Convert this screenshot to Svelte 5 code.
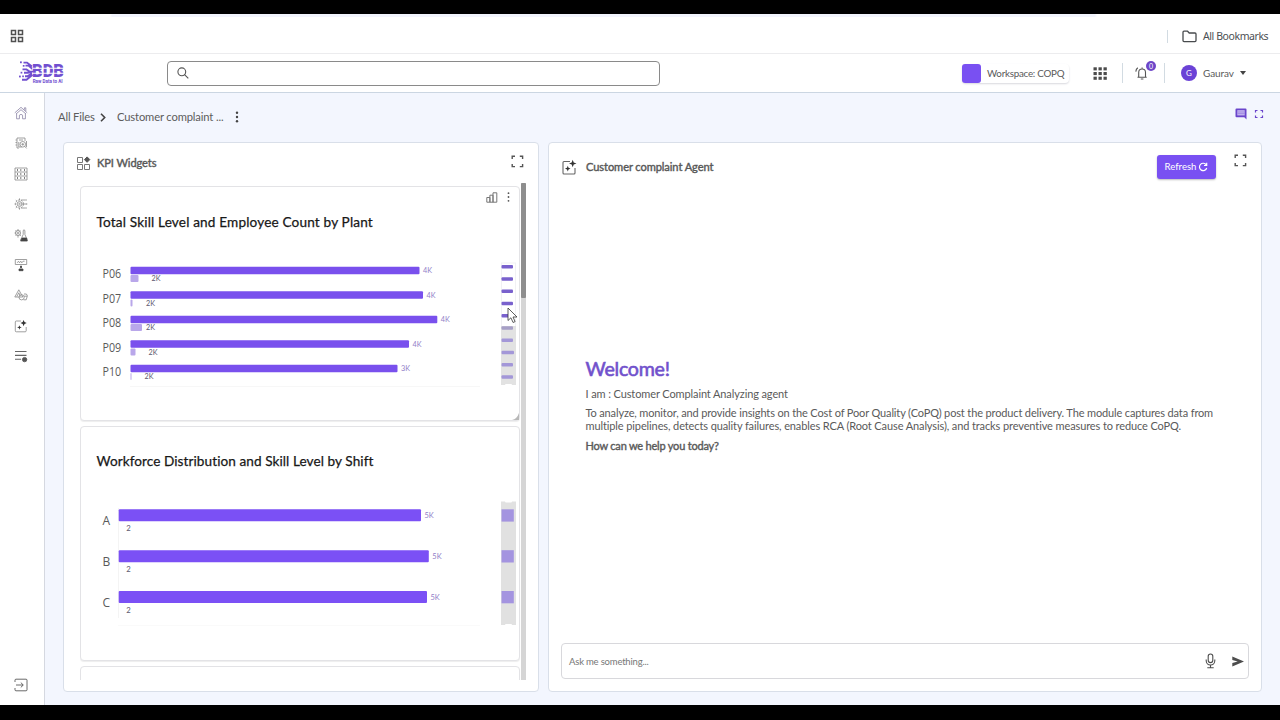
<script>
  const plants = [
    { name: 'P06', y: 270.5, end: 419.5, label: '4K', sub: 8, subX: 151.5 },
    { name: 'P07', y: 295, end: 423, label: '4K', sub: 2, subX: 146 },
    { name: 'P08', y: 319.5, end: 437.3, label: '4K', sub: 11.5, subX: 146 },
    { name: 'P09', y: 344, end: 409, label: '4K', sub: 5, subX: 148.5 },
    { name: 'P10', y: 368.5, end: 397.5, label: '3K', sub: 1, subX: 144.5 },
  ];
  const shifts = [
    { name: 'A', y: 515.3, end: 421 },
    { name: 'B', y: 556.2, end: 428.8 },
    { name: 'C', y: 597, end: 427 },
  ];
  const ticks = [0, 1, 2, 3, 4, 5, 6, 7, 8, 9];
</script>

<div class="screen">
  <div class="chrome">
    <svg class="grid4" width="14" height="14" viewBox="0 0 14 14" fill="none" stroke="#505050" stroke-width="1.5">
      <path d="M1.5 1.5h4v4h-4zM8.5 1.5h4v4h-4zM1.5 8.5h4v4h-4zM8.5 8.5h4v4h-4z" />
    </svg>
    <i class="vline"></i>
    <svg width="15" height="13" viewBox="0 0 15 13" fill="none" stroke="#484b4e" stroke-width="1.3" stroke-linejoin="round">
      <path d="M1 2.2Q1 1.2 2 1.2h3.6L7.2 3H13q1 0 1 1v6.6q0 1-1 1H2q-1 0-1-1z" />
    </svg>
    <span class="bookmarks">All Bookmarks</span>
  </div>

  <header>
    <svg class="logo" width="48" height="26" viewBox="18 60 48 26">
      <g stroke="#714fd0" stroke-width="1.9" fill="none">
        <path d="M23.5 62.600h3.500l5 4M25.500 65.600h3l4 3.400M22.500 69.400h4l3 2.200h4M24 72.700h4l4-.8M25 76.200h2.500l4.500-3M22 79.800h4.500l6-5" />
      </g>
      <g fill="#714fd0">
        <rect x="20" y="61.400" width="1.800" height="1.800" /><rect x="22.800" y="65" width="1.700" height="1.700" />
        <rect x="19" y="75.600" width="1.800" height="1.800" /><rect x="22.200" y="75.500" width="1.700" height="1.700" />
        <rect x="20.600" y="71.800" width="1.700" height="1.700" />
      </g>
      <text class="mark" x="32" y="77.400" textLength="32" lengthAdjust="spacingAndGlyphs">BDB</text>
      <path d="M32 68.300h32M32 73.300h32" stroke="#fff" stroke-width="1.100" />
      <text class="tag" x="32.700" y="83.300" textLength="30" lengthAdjust="spacingAndGlyphs">Raw Data to AI</text>
    </svg>
    <div class="search">
      <svg width="12" height="12" viewBox="0 0 12 12" fill="none" stroke="#555" stroke-width="1.1"><circle cx="4.800" cy="4.800" r="3.900" /><path d="M7.600 7.600l3.700 3.700" /></svg>
    </div>
    <div class="workspace"><b></b><span>Workspace: COPQ</span></div>
    <svg class="apps" width="14" height="13" viewBox="0 0 14 13" fill="#4b4b4b">
      {#each [0, 1, 2] as r}
        {#each [0, 1, 2] as c}
          <rect x={0.5 + c * 5} y={0.3 + r * 4.7} width="3.300" height="3.100" />
        {/each}
      {/each}
    </svg>
    <i class="vline v1"></i>
    <div class="bell">
      <svg width="14" height="15" viewBox="0 0 14 15" fill="none" stroke="#555" stroke-width="1.1">
        <path d="M2.500 11.200h9.200M3.700 11V6.400a3.400 3.400 0 0 1 6.800 0V11M7.100 3V1.600M5.800 13h2.600" />
        <path d="M.8 5.600Q1 3.200 2.800 1.800" />
      </svg>
      <em>0</em>
    </div>
    <i class="vline v2"></i>
    <span class="avatar">G</span>
    <span class="user">Gaurav</span>
    <i class="caret"></i>
  </header>

  <div class="body">
    <nav>
      <svg viewBox="0 0 14 14"><g stroke="#8a83a4"><path d="M.8 6.800 7 1.300l6.200 5.500M2 8l5-4.300L12 8M10.400 3.700V1.800h1.400v3.400" /><path d="M2.600 7.800v5h2.800V9.200q1.600-1.800 3.200 0v3.600h2.800v-5" /></g></svg>
      <svg viewBox="0 0 14 14"><path d="M3 2h8v3M3 2v10h2M1.500 4h1.400M1.500 6.500h1.400M1.500 9h1.400M5 4h4M4.800 6v5h3" /><circle cx="8.800" cy="8.300" r="2.800" /><path d="M7.400 8.300h2.800M8.800 7v2.700M10.800 10.400l1.800 2M12.500 5v6" /></svg>
      <svg viewBox="0 0 14 14"><path d="M1 1h12v12H1zM1 5h12M1 9h12" /><path stroke="#555" stroke-width="1.400" d="M3 3h1M6.300 3h1M10 3h1M3 7h1M6.300 7h1M10 7h1M3 11h1M6.300 11h1M10 11h1" /></svg>
      <svg viewBox="0 0 14 14"><circle cx="5.500" cy="7" r="4" stroke-dasharray="2 .8" /><circle cx="5.500" cy="7" r="2.400" /><path d="M5.500 1.400v1.800M5.500 10.800v1.800M.5 7h1.200M1.800 3.200l1.200 1M1.800 10.800l1.200-1M7 3h4M7.800 7H12M7 11h4" /><path stroke="#555" stroke-width="1.200" d="M11.500 3h1M12.200 7h1M11.500 11h1" /><path d="M4.500 6.300h2M4.500 7.800h2" /></svg>
      <svg viewBox="0 0 14 14"><circle cx="4" cy="5" r="2.600" /><circle cx="4" cy="5" r="1" /><path d="M4 1v1.400M4 7.600v2M.6 5h1M1.500 2.500l1 1M1.600 7.500l1-1M6.400 2.600l-1 1M5.500 6.700l1.500 1M9 2.200h2M9.200 2.500v4L6.600 12M10.900 2.500v4l2.200 5" /><path fill="#444" stroke="#444" d="M8 10h4.600l.7 3H6.600z" /></svg>
      <svg viewBox="0 0 14 14"><path d="M1.300 1.500h11.400v5H1.300zM3.200 4.800l1.300-1.600 1 1.600 1.300-1.600 1 1.600 1.300-1.600h1.500" /><path fill="#444" stroke="#444" d="M6.500 8h1v1.800h-1zM5 11h4v1.700H5z" /></svg>
      <svg viewBox="0 0 14 14"><path d="m.8 9 4-7.200 4 7.200zM2.800 8.600l2-3.800 1.500 3.300" /><circle cx="7.600" cy="9.300" r="2.600" /><path d="M10 6h2.400l1 1.800-1.200 4H9.600M10 8.200h3" /></svg>
      <svg viewBox="0 0 14 14"><path d="M7 2H2.200Q1.300 2 1.300 3v8.800q0 1 .9 1h9q1 0 1-1V8" /><path fill="#333" stroke="none" d="M9.600.9l.9 2.200 2.200.9-2.200.9-.9 2.300-.9-2.300L6.500 4l2.200-.9zM5.400 6.200l.6 1.600 1.700.7-1.700.6-.6 1.700-.6-1.700-1.700-.6 1.700-.7z" /></svg>
      <svg viewBox="0 0 14 14"><path stroke="#666" stroke-width="1.100" d="M1 2.500h11.500M1 6.400h11.500M1 10.200h6" /><circle cx="10.600" cy="10.600" r="2.200" fill="#555" stroke="#555" /></svg>
      <svg class="exit" viewBox="0 0 14 14"><path stroke="#444" d="M1 4V2.200q0-1 1-1h10q1 0 1 1v9.600q0 1-1 1H2q-1 0-1-1V10M2 7h7M6.800 4.600 9.300 7 6.800 9.400" /></svg>
    </nav>

    <main>
      <div class="crumbs">
        <span class="c1">All Files</span>
        <svg width="6" height="9" viewBox="0 0 6 9" fill="none" stroke="#444" stroke-width="1.600"><path d="M1 .8 4.700 4.500 1 8.200" /></svg>
        <span class="c2">Customer complaint ...</span>
        <svg class="more" width="4" height="12" viewBox="0 0 4 12" fill="#444"><circle cx="2" cy="1.800" r="1.200" /><circle cx="2" cy="6" r="1.200" /><circle cx="2" cy="10.200" r="1.200" /></svg>
        <svg class="chat" width="12" height="12" viewBox="0 0 12 12"><path fill="#6a45cb" d="M1.500.5h9q1 0 1 1v10L9.300 9.300H1.500q-1 0-1-1V1.500q0-1 1-1z" /><path fill="#c9baf2" d="M2.300 2.200h7.400v5.200H2.300z" /><path stroke="#8d72da" stroke-width=".7" d="M2.600 4h7M2.600 5.700h7" /></svg>
        <svg class="full" width="10" height="10" viewBox="0 0 10 10" fill="none" stroke="#6a45cb" stroke-width="1.200"><path d="M1.500 3.500V1.500h2M6.500 1.500h2v2M8.500 6.500v2h-2M3.500 8.500h-2v-2" /></svg>
      </div>

      <div class="panels">
        <section class="kpi">
          <div class="head">
            <svg width="15" height="15" viewBox="0 0 15 15" fill="none" stroke="#777" stroke-width="1"><path d="M1.500 1.500h5v5h-5zM1.500 8.500h5v5h-5zM8.500 8.500h5v5h-5z" /><path fill="#555" stroke="#555" d="M11.100.9l2.700 2.700-2.700 2.700-2.700-2.700z" /></svg>
            <h2>KPI Widgets</h2>
            <svg class="expand" width="13" height="13" viewBox="0 0 13 13" fill="none" stroke="#555" stroke-width="1.400"><path d="M1.200 4V1.200H4M8.800 1.200h2.800V4M11.600 9v2.600H8.800M4 11.600H1.200V9" /></svg>
          </div>
          <div class="scroll">
            <div class="cards">
              <article>
                <div class="tools">
                  <svg width="12" height="11" viewBox="0 0 12 11" fill="none" stroke="#777" stroke-width="1"><path d="M.8 5.500h3.100v4.700H.8zM3.900 3.200H7v7H3.900zM7 .8h3.800v9.400H7z" /></svg>
                  <svg width="3" height="10" viewBox="0 0 3 10" fill="#555"><circle cx="1.500" cy="1.200" r=".9" /><circle cx="1.500" cy="5" r=".9" /><circle cx="1.500" cy="8.800" r=".9" /></svg>
                </div>
                <h3 class="t1">Total Skill Level and Employee Count by Plant</h3>
                <svg class="chart" width="438" height="162" viewBox="81 258 438 162">
                  <path d="M130 386.500h350" stroke="#f7f7f7" />
                  <rect x="501.500" y="263" width="14" height="64" fill="none" stroke="#f1f1f4" />
                  <rect x="501" y="326" width="15" height="59" fill="#e2e2e2" />
                  {#each ticks as t}
                    <rect x="501.500" y={264.9 + t * 12.25} width={t === 7 ? 12.5 : 11.5} height="3.600" rx="1" fill={t < 5 ? '#7961cd' : t === 5 ? '#a69fc6' : '#a397d8'} />
                  {/each}
                  <rect x="505" y="384" width="7" height="2" rx="1" fill="#fff" />
                  {#each plants as p}
                    <text class="cat" x="102.500" y={p.y + 7.6} textLength="18.700" lengthAdjust="spacingAndGlyphs">{p.name}</text>
                    <rect x="130.500" y={p.y - 3.7} width={p.end - 130.5} height="7.400" rx="1" fill="#7950ed" />
                    <rect x="130.500" y={p.y + 4.6} width={p.sub} height="7" rx="1" fill="#b9a7ea" />
                    <text class="val" x={p.end + 3.5} y={p.y + 2.6} textLength="9" lengthAdjust="spacingAndGlyphs">{p.label}</text>
                    <text class="val dark" x={p.subX} y={p.y + 10.8} textLength="9" lengthAdjust="spacingAndGlyphs">2K</text>
                  {/each}
                  <path d="M519 413v7h-7q5-1 7-7z" fill="#b8b8b8" />
                </svg>
              </article>
              <article>
                <h3 class="t2">Workforce Distribution and Skill Level by Shift</h3>
                <svg class="chart" width="438" height="162" viewBox="81 498 438 162">
                  <path d="M118.500 508v110" stroke="#f4f4f4" />
                  <path d="M118 625.500h362" stroke="#fafafa" />
                  <rect x="501" y="501.500" width="15" height="123.500" fill="#e1e1e1" />
                  <rect x="505" y="500.500" width="7" height="2" rx="1" fill="#fff" /><rect x="505" y="624" width="7" height="2" rx="1" fill="#fff" />
                  {#each shifts as s}
                    <text class="cat" x="102.500" y={s.y + 9.9}>{s.name}</text>
                    <rect x="118.700" y={s.y - 6} width={s.end - 118.7} height="12" rx="1" fill="#7b50f5" />
                    <text class="val" x={s.end + 3.5} y={s.y + 2.5} textLength="9.300" lengthAdjust="spacingAndGlyphs">5K</text>
                    <text class="val dark" x="126.300" y={s.y + 16} textLength="4.500" lengthAdjust="spacingAndGlyphs">2</text>
                    <rect x="501.500" y={s.y - 6} width="12.300" height="12.300" fill="#a494e0" />
                  {/each}
                </svg>
              </article>
              <article></article>
            </div>
            <div class="track"><i></i></div>
          </div>
        </section>

        <section class="agent">
          <div class="head">
            <svg width="16" height="16" viewBox="0 0 16 16" fill="none" stroke="#666" stroke-width="1.100"><path d="M8 2.500H2q-1 0-1 1V14q0 1 1 1h10q1 0 1-1V9" /><path fill="#333" stroke="none" d="M10.700.8l1 2.700 2.800 1-2.800 1.100-1 2.700-1-2.700-2.700-1.100 2.700-1zM5.800 6.800l.7 2 2 .8-2 .8-.7 2-.8-2-2-.8 2-.8z" /></svg>
            <h2>Customer complaint Agent</h2>
            <button>Refresh <svg width="10" height="10" viewBox="0 0 10 10" fill="none" stroke="#fff" stroke-width="1.200"><path d="M8.300 3A3.700 3.700 0 1 0 8.700 6M8.700.8v2.700H6" /></svg></button>
            <svg class="expand" width="13" height="13" viewBox="0 0 13 13" fill="none" stroke="#555" stroke-width="1.400"><path d="M1.200 4V1.200H4M8.800 1.200h2.800V4M11.600 9v2.600H8.800M4 11.600H1.200V9" /></svg>
          </div>
          <div class="welcome">
            <h1>Welcome!</h1>
            <p class="p1">I am : Customer Complaint Analyzing agent</p>
            <p class="p2"><span>To analyze, monitor, and provide insights on the Cost of Poor Quality (CoPQ) post the product delivery. The module captures data from</span><br /><span class="l2">multiple pipelines, detects quality failures, enables RCA (Root Cause Analysis), and tracks preventive measures to reduce CoPQ.</span></p>
            <p class="p3">How can we help you today?</p>
          </div>
          <div class="ask">
            <span>Ask me something...</span>
            <svg width="11" height="16" viewBox="0 0 11 16" fill="none" stroke="#4d4d4d" stroke-width="1.100"><rect x="3.200" y="1" width="4.600" height="8.600" rx="2.300" /><path d="M1.200 6.500v1.200a4.300 4.300 0 0 0 8.600 0V6.500M5.500 12v2.700M2.300 14.700h6.400" /></svg>
            <svg width="12" height="11" viewBox="0 0 12 11" fill="#4d4d4d"><path d="M.3.500 12 5.500.3 10.500V6.900l5.400-1.400L.3 4.100z" /></svg>
          </div>
        </section>
      </div>
    </main>
  </div>
  <svg class="cursor" width="12" height="18" viewBox="0 0 12 18"><path d="M1 1v12.500l2.900-2.700 2.200 4.700 2-.9-2.100-4.600h4z" fill="#fff" stroke="#333" stroke-width=".8" /></svg>
</div>

<style>
  :global(body) { margin: 0; background: #000; }
  .screen { position: relative; box-sizing: border-box; width: 1280px; height: 720px; padding: 14px 0 15px; background: #000; display: flex; flex-direction: column; font-family: Lato, sans-serif; color: #5a5a5a; overflow: hidden; }
  svg { display: block; flex: none; }
  h1, h2, h3, p { margin: 0; white-space: nowrap; }
  i { display: block; flex: none; }
  .chrome { box-sizing: border-box; height: 40px; flex: none; background: linear-gradient(90deg, transparent 110px, #f2f4fd 112px 1095px, transparent 1097px) 0 0 / 100% 3px no-repeat, #fff; border-bottom: 1px solid #ececee; display: flex; align-items: center; padding: 5px 12px 0 10px; }
  .chrome .vline { margin-left: auto; margin-right: 14px; height: 13px; }
  .vline { width: 1px; background: #d2dbe2; }
  .bookmarks { font: 10.5px/14px "Noto Sans", sans-serif; letter-spacing: -.42px; margin-left: 6px; color: #4c5054; white-space: nowrap; width: 65px; }
  header { box-sizing: border-box; height: 39px; flex: none; background: #fff; border-bottom: 1px solid #cbd6e2; display: flex; align-items: center; padding: 0 0 0 18px; }
  .mark { font: 900 18px Roboto, sans-serif; fill: #714fd0; }
  .tag { font: bold 4.8px Roboto, sans-serif; fill: #714fd0; }
  .search { box-sizing: border-box; margin-left: 101px; width: 493px; height: 25px; border: 1px solid #8a8a8a; border-radius: 4px; display: flex; align-items: center; padding-left: 9px; }
  .workspace { margin-left: 302px; width: 107px; height: 19px; display: flex; align-items: center; border-radius: 4px; box-shadow: 0 1px 2px #d8d8de; font-size: 9.8px; letter-spacing: -.25px; white-space: nowrap; }
  .workspace b { flex: none; width: 19px; height: 19px; border-radius: 3px; background: #7950f2; margin-right: 6px; }
  .apps { margin-left: 24px; }
  header .vline { height: 20px; }
  header .v1 { margin-left: 15px; }
  .bell { position: relative; margin-left: 12px; }
  .bell em { position: absolute; left: 11px; top: -5px; width: 10px; height: 10px; border-radius: 50%; background: #6d46c8; color: #fff; font: 7px/10px Lato, sans-serif; text-align: center; }
  header .v2 { margin-left: 15px; }
  .avatar { margin-left: 16px; width: 16px; height: 16px; border-radius: 50%; background: #6b42d6; color: #fff; font-size: 8px; line-height: 16px; text-align: center; }
  .user { margin-left: 6px; font-size: 10px; letter-spacing: -.1px; width: 31px; white-space: nowrap; }
  .caret { margin-left: 6px; border: 3px solid transparent; border-top: 4px solid #444; border-bottom: 0; }
  .body { flex: 1; min-height: 0; display: flex; background: #f3f6fe; }
  nav { box-sizing: border-box; width: 45px; background: #fff; border-right: 1px solid #d5d8e0; display: flex; flex-direction: column; align-items: center; gap: 16.4px; padding: 13px 2px 13px 0; }
  nav svg { width: 14px; height: 14px; fill: none; stroke: #888; stroke-width: .8; }
  nav .exit { margin-top: auto; }
  main { flex: 1; min-width: 0; display: flex; flex-direction: column; padding: 0 18px 13px; }
  .crumbs { box-sizing: border-box; height: 49px; flex: none; display: flex; align-items: center; padding-bottom: 1px; font-size: 11.2px; margin-left: -5px; color: #5c5c5c; white-space: nowrap; }
  .c1 { width: 37px; margin-right: 5px; letter-spacing: -.15px; margin-top: -1px; }
  .c2 { margin-left: 11px; width: 106px; letter-spacing: -.14px; margin-top: -1px; }
  .more { margin-left: 12px; }
  .chat { margin-left: auto; margin-top: -6px; }
  .full { margin: -6px -2px 0 7px; }
  .panels { flex: 1; min-height: 0; display: flex; gap: 9px; }
  section { box-sizing: border-box; background: #fff; border: 1px solid #d9dfe9; border-radius: 4px; display: flex; flex-direction: column; }
  .kpi { width: 476px; padding: 0 12px 11px 16px; }
  .agent { width: 714px; padding: 0 12px 12px 12px; }
  .head { flex: none; display: flex; align-items: center; }
  .kpi .head { height: 40px; margin-left: -4px; }
  .agent .head { height: 47px; padding-left: 1px; }
  h2 { font-size: 11.1px; line-height: 16px; font-weight: 400; letter-spacing: -.09px; color: #585858; -webkit-text-stroke: .4px #585858; }
  .kpi h2 { margin-left: 6px; }
  .agent h2 { margin-left: 8px; }
  .expand { margin-left: auto; }
  .kpi .expand { margin-top: -4px; margin-right: 2px; }
  .agent .expand { margin: -13px 2px 0 18px; }
  .scroll { flex: 1; min-height: 0; display: flex; overflow: hidden; }
  .cards { width: 440px; display: flex; flex-direction: column; gap: 5px; padding-top: 3px; background: #fff; }
  article { box-sizing: border-box; height: 235px; flex: none; border: 1px solid #e3e3e6; border-radius: 4px; background: #fff; box-shadow: 0 1px 1px #eee; display: flex; flex-direction: column; justify-content: flex-end; }
  .tools { display: flex; align-items: center; justify-content: flex-end; gap: 9px; padding-right: 9px; height: 10px; margin-bottom: 10px; }
  h3 { font-size: 13.6px; line-height: 20px; font-weight: 400; color: #181818; -webkit-text-stroke: .25px #181818; }
  .t1 { margin: 0 0 26px 15.5px; letter-spacing: .16px; }
  .t2 { margin: 0 0 27px 15.5px; letter-spacing: .07px; }
  .cat { font: 12px "Open Sans", sans-serif; fill: #5a5a5a; }
  .val { font: 7px Lato, sans-serif; fill: #9180c8; }
  .dark { fill: #5c586e; }
  .track { width: 5px; margin-left: 1px; background: #d5d5d5; }
  .track i { height: 115px; background: #8e8e8e; border-radius: 1px; }
  button { margin-left: auto; width: 59px; height: 24px; border: 0; border-radius: 3px; padding: 0; background: #7950f2; color: #fff; font: 9.6px Lato, sans-serif; display: flex; align-items: center; justify-content: center; gap: 2px; box-shadow: 0 1px 2px #bbb; white-space: nowrap; }
  .welcome { flex: 1; padding: 167px 0 0 24.5px; font-size: 11px; line-height: 13px; letter-spacing: -.14px; }
  .l2 { letter-spacing: -.11px; }
  h1 { font-size: 19.6px; line-height: 24px; font-weight: 400; color: #7151cc; -webkit-text-stroke: .6px #7151cc; letter-spacing: -.25px; }
  .p1 { margin-top: 6px; letter-spacing: -.11px; }
  .p2 { margin-top: 6px; }
  .p3 { margin-top: 7px; letter-spacing: -.2px; -webkit-text-stroke: .4px #5a5a5a; }
  .ask { box-sizing: border-box; height: 36px; border: 1px solid #d8d8dc; border-radius: 4px; display: flex; align-items: center; padding: 0 4px 0 7px; font-size: 9.5px; letter-spacing: -.2px; color: #777; }
  .ask span { margin-right: auto; }
  .ask svg + svg { margin-left: 16px; }
  .cursor { position: absolute; left: 507px; top: 307px; }
</style>
